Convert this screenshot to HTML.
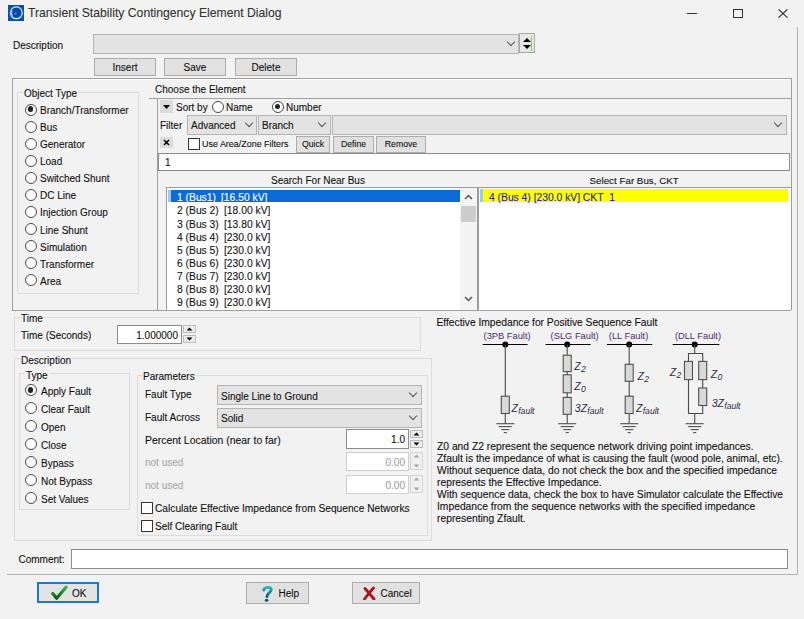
<!DOCTYPE html>
<html><head><meta charset="utf-8">
<style>
*{box-sizing:border-box;margin:0;padding:0}
html,body{width:804px;height:619px;overflow:hidden;background:#f2f2f2}
body{position:relative;font-family:"Liberation Sans",sans-serif;font-size:10px;color:#111;-webkit-text-stroke:0.1px currentColor}
.a{position:absolute;white-space:nowrap}
.t{position:absolute;white-space:nowrap;line-height:12px;height:12px;margin-top:1px}
.btn{position:absolute;background:#e1e1e1;border:1px solid #adadad;text-align:center;line-height:17px;font-size:10px}
.combo{position:absolute;background:#e3e3e3;border:1px solid #b4b4b4}
.edit{position:absolute;background:#fff;border:1px solid #8c8c8c}
.grp{position:absolute;border:1px solid #dcdcdc}
.lbl{position:absolute;white-space:nowrap;background:#f2f2f2;padding:0 1px;line-height:12px;margin-top:1px}
.radio{position:absolute;width:12px;height:12px;border:1.5px solid #484848;border-radius:50%;background:#fff}
.radio.on::after{content:"";position:absolute;left:1.75px;top:1.75px;width:5.5px;height:5.5px;border-radius:50%;background:#222}
.chk{position:absolute;width:12px;height:12px;border:1px solid #333;background:#fff}
.chev{position:absolute;width:6px;height:6px;border-right:1px solid #555;border-bottom:1px solid #555;transform:rotate(45deg)}
</style></head><body>

<!-- title bar -->
<svg class="a" style="left:8px;top:5px" width="16" height="16" viewBox="0 0 16 16">
<rect width="16" height="16" fill="#0d4fb0"/>
<circle cx="8.3" cy="7.8" r="5.9" fill="none" stroke="#dfe8f5" stroke-width="1.3"/>
<circle cx="8.3" cy="7.8" r="5" fill="#0a48a8"/>
<path d="M2.5 5 Q1.5 9 4 12 L5 10 Q3.5 8 4.5 5Z" fill="#8fb4e0"/>
<circle cx="7.5" cy="8.5" r="1.2" fill="#3f7ad0"/>
</svg>
<div class="a" style="left:28px;top:6px;font-size:12.2px;line-height:15px;color:#333">Transient Stability Contingency Element Dialog</div>
<div class="a" style="left:687px;top:13px;width:10px;height:1px;background:#333"></div>
<div class="a" style="left:733px;top:9px;width:10px;height:9px;border:1px solid #333"></div>
<svg class="a" style="left:778px;top:9px" width="10" height="9" viewBox="0 0 10 9"><path d="M0.5 0.3L9.5 8.7M9.5 0.3L0.5 8.7" stroke="#333" stroke-width="1.1"/></svg>

<!-- description row -->
<div class="t" style="left:13px;top:39px">Description</div>
<div class="combo" style="left:93px;top:34px;width:426px;height:20px"></div>
<div class="chev" style="left:508px;top:39px"></div>
<div class="a" style="left:519px;top:33px;width:16px;height:20px;border:1px solid #a8a8a8;background:#e8e8e8"></div>
<div class="a" style="left:531px;top:36px;width:1px;height:15px;background:#7ad858"></div>
<svg class="a" style="left:522px;top:36px" width="10" height="15" viewBox="0 0 10 15"><path d="M1 6L5 2L9 6Z M1 9L9 9L5 13Z" fill="#000"/></svg>

<div class="btn" style="left:94px;top:58px;width:62px;height:18px">Insert</div>
<div class="btn" style="left:164px;top:58px;width:62px;height:18px">Save</div>
<div class="btn" style="left:235px;top:58px;width:62px;height:18px">Delete</div>

<!-- outer panel lines -->
<div class="a" style="left:12px;top:78px;width:779px;height:1px;background:#a0a0a0"></div>
<div class="a" style="left:12px;top:79px;width:779px;height:1px;background:#fff"></div>
<div class="a" style="left:12px;top:78px;width:1px;height:232px;background:#a0a0a0"></div>
<div class="a" style="left:12px;top:310px;width:779px;height:1px;background:#a0a0a0"></div>
<div class="a" style="left:797px;top:27px;width:1px;height:548px;background:#b4b4b4"></div>
<div class="a" style="left:7px;top:574px;width:791px;height:1px;background:#b4b4b4"></div>

<div class="grp" style="left:17px;top:92px;width:122px;height:202px"></div>
<div class="lbl" style="left:23px;top:87px">Object Type</div>
<div class="radio on" style="left:25px;top:103.5px"></div>
<div class="t" style="left:40px;top:104.0px">Branch/Transformer</div>
<div class="radio" style="left:25px;top:120.6px"></div>
<div class="t" style="left:40px;top:121.1px">Bus</div>
<div class="radio" style="left:25px;top:137.6px"></div>
<div class="t" style="left:40px;top:138.1px">Generator</div>
<div class="radio" style="left:25px;top:154.7px"></div>
<div class="t" style="left:40px;top:155.2px">Load</div>
<div class="radio" style="left:25px;top:171.8px"></div>
<div class="t" style="left:40px;top:172.3px">Switched Shunt</div>
<div class="radio" style="left:25px;top:188.8px"></div>
<div class="t" style="left:40px;top:189.3px">DC Line</div>
<div class="radio" style="left:25px;top:205.9px"></div>
<div class="t" style="left:40px;top:206.4px">Injection Group</div>
<div class="radio" style="left:25px;top:223.0px"></div>
<div class="t" style="left:40px;top:223.5px">Line Shunt</div>
<div class="radio" style="left:25px;top:240.1px"></div>
<div class="t" style="left:40px;top:240.6px">Simulation</div>
<div class="radio" style="left:25px;top:257.1px"></div>
<div class="t" style="left:40px;top:257.6px">Transformer</div>
<div class="radio" style="left:25px;top:274.2px"></div>
<div class="t" style="left:40px;top:274.7px">Area</div>
<div class="t" style="left:155px;top:83px">Choose the Element</div>
<div class="a" style="left:149px;top:98px;width:642px;height:1px;background:#a0a0a0"></div>
<div class="a" style="left:791px;top:78px;width:1px;height:232px;background:#a0a0a0"></div>
<div class="a" style="left:157px;top:98px;width:1px;height:212px;background:#a0a0a0"></div>
<div class="a" style="left:160px;top:100px;width:13px;height:13px;background:#dcdcdc"></div>
<svg class="a" style="left:163px;top:105px" width="7" height="4"><path d="M0 0H7L3.5 4Z" fill="#000"/></svg>
<div class="t" style="left:176px;top:101px">Sort by</div>
<div class="radio" style="left:212px;top:101px"></div>
<div class="t" style="left:226px;top:101px">Name</div>
<div class="radio on" style="left:272px;top:101px"></div>
<div class="t" style="left:286px;top:101px">Number</div>
<div class="t" style="left:160px;top:119px">Filter</div>
<div class="combo" style="left:187px;top:115px;width:70px;height:20px"></div>
<div class="t" style="left:191px;top:119px">Advanced</div>
<div class="chev" style="left:246px;top:120px"></div>
<div class="combo" style="left:258px;top:115px;width:73px;height:20px"></div>
<div class="t" style="left:262px;top:119px">Branch</div>
<div class="chev" style="left:319px;top:120px"></div>
<div class="combo" style="left:332px;top:115px;width:455px;height:20px"></div>
<div class="chev" style="left:775px;top:120px"></div>
<div class="a" style="left:160px;top:137px;width:13px;height:11px;background:#dcdcdc"></div>
<svg class="a" style="left:163px;top:139px" width="7" height="7"><path d="M1 1L6 6M6 1L1 6" stroke="#000" stroke-width="1.6"/></svg>
<div class="chk" style="left:188px;top:138px"></div>
<div class="t" style="left:202px;top:137px;font-size:8.95px">Use Area/Zone Filters</div>
<div class="btn" style="left:296px;top:136px;width:34px;height:17px;font-size:8.7px;line-height:15px">Quick</div>
<div class="btn" style="left:333px;top:136px;width:41px;height:17px;font-size:8.7px;line-height:15px">Define</div>
<div class="btn" style="left:376px;top:136px;width:50px;height:17px;font-size:8.7px;line-height:15px">Remove</div>
<div class="edit" style="left:158px;top:153px;width:632px;height:18px"></div>
<div class="t" style="left:165px;top:156px">1</div>
<div class="t" style="left:271px;top:174px">Search For Near Bus</div>
<div class="t" style="left:589.5px;top:174px;font-size:9.8px">Select Far Bus, CKT</div>
<div class="a" style="left:166px;top:187px;width:312px;height:123px;background:#fff;border:1px solid #9a9a9a;border-bottom:none"></div>
<div class="a" style="left:168px;top:190px;width:292px;height:12px;background:#0c6ad8"></div>
<div class="a" style="left:168px;top:190px;width:3px;height:12px;background:#9ccaf0"></div>
<div class="t" style="left:177px;top:191.3px;font-size:10.3px;color:#fff">1 (Bus1)</div>
<div class="t" style="left:221px;top:191.3px;font-size:10.3px;color:#fff">[16.50 kV]</div>
<div class="t" style="left:177px;top:204.4px;font-size:10.3px;color:#111">2 (Bus 2)</div>
<div class="t" style="left:224px;top:204.4px;font-size:10.3px;color:#111">[18.00 kV]</div>
<div class="t" style="left:177px;top:217.6px;font-size:10.3px;color:#111">3 (Bus 3)</div>
<div class="t" style="left:224px;top:217.6px;font-size:10.3px;color:#111">[13.80 kV]</div>
<div class="t" style="left:177px;top:230.7px;font-size:10.3px;color:#111">4 (Bus 4)</div>
<div class="t" style="left:224px;top:230.7px;font-size:10.3px;color:#111">[230.0 kV]</div>
<div class="t" style="left:177px;top:243.9px;font-size:10.3px;color:#111">5 (Bus 5)</div>
<div class="t" style="left:224px;top:243.9px;font-size:10.3px;color:#111">[230.0 kV]</div>
<div class="t" style="left:177px;top:257.0px;font-size:10.3px;color:#111">6 (Bus 6)</div>
<div class="t" style="left:224px;top:257.0px;font-size:10.3px;color:#111">[230.0 kV]</div>
<div class="t" style="left:177px;top:270.1px;font-size:10.3px;color:#111">7 (Bus 7)</div>
<div class="t" style="left:224px;top:270.1px;font-size:10.3px;color:#111">[230.0 kV]</div>
<div class="t" style="left:177px;top:283.3px;font-size:10.3px;color:#111">8 (Bus 8)</div>
<div class="t" style="left:224px;top:283.3px;font-size:10.3px;color:#111">[230.0 kV]</div>
<div class="t" style="left:177px;top:296.4px;font-size:10.3px;color:#111">9 (Bus 9)</div>
<div class="t" style="left:224px;top:296.4px;font-size:10.3px;color:#111">[230.0 kV]</div>
<div class="a" style="left:460px;top:188px;width:17px;height:122px;background:#f4f4f4"></div>
<svg class="a" style="left:464px;top:194px" width="9" height="6"><path d="M1 5L4.5 1.5L8 5" stroke="#555" stroke-width="1.5" fill="none"/></svg>
<div class="a" style="left:461px;top:206px;width:15px;height:16px;background:#cdcdcd"></div>
<svg class="a" style="left:464px;top:296px" width="9" height="6"><path d="M1 1L4.5 4.5L8 1" stroke="#555" stroke-width="1.5" fill="none"/></svg>
<div class="a" style="left:478px;top:187px;width:314px;height:123px;background:#fff;border:1px solid #9a9a9a;border-bottom:none"></div>
<div class="a" style="left:483px;top:189px;width:305px;height:13px;background:#ffff00"></div>
<div class="a" style="left:480px;top:189px;width:3px;height:13px;background:#9ccaf0"></div>
<div class="t" style="left:489px;top:191px;font-size:10.3px;color:#1c1cb0">4 (Bus 4) [230.0 kV] CKT&nbsp; 1</div>
<div class="grp" style="left:14px;top:317px;width:407px;height:34px"></div>
<div class="lbl" style="left:20px;top:312px">Time</div>
<div class="t" style="left:21px;top:329px">Time (Seconds)</div>
<div class="edit" style="left:117px;top:325px;width:65px;height:19px"></div>
<div class="t" style="left:117px;top:329px;width:61px;text-align:right">1.000000</div>
<div class="a" style="left:183px;top:325px;width:13px;height:8.0px;border:1px solid #bcbcbc;background:#ececec"></div>
<div class="a" style="left:183px;top:335.0px;width:13px;height:8.0px;border:1px solid #bcbcbc;background:#ececec"></div>
<svg class="a" style="left:183px;top:325px" width="13" height="18" viewBox="183 325 13 18"><path d="M186.5 330.5L189.5 327.5L192.5 330.5Z M186.5 337.5H192.5L189.5 340.5Z" fill="#000"/></svg>
<div class="grp" style="left:14px;top:358px;width:418px;height:183px"></div>
<div class="lbl" style="left:20px;top:353.5px">Description</div>
<div class="grp" style="left:19px;top:373px;width:111px;height:137px"></div>
<div class="lbl" style="left:25px;top:368.5px">Type</div>
<div class="radio on" style="left:25px;top:384.4px"></div>
<div class="t" style="left:41px;top:384.9px">Apply Fault</div>
<div class="radio" style="left:25px;top:402.3px"></div>
<div class="t" style="left:41px;top:402.8px">Clear Fault</div>
<div class="radio" style="left:25px;top:420.3px"></div>
<div class="t" style="left:41px;top:420.8px">Open</div>
<div class="radio" style="left:25px;top:438.2px"></div>
<div class="t" style="left:41px;top:438.7px">Close</div>
<div class="radio" style="left:25px;top:456.1px"></div>
<div class="t" style="left:41px;top:456.6px">Bypass</div>
<div class="radio" style="left:25px;top:474.0px"></div>
<div class="t" style="left:41px;top:474.5px">Not Bypass</div>
<div class="radio" style="left:25px;top:492.0px"></div>
<div class="t" style="left:41px;top:492.5px">Set Values</div>
<div class="grp" style="left:137px;top:375px;width:291px;height:161px"></div>
<div class="lbl" style="left:142px;top:369.5px">Parameters</div>
<div class="t" style="left:145px;top:388px">Fault Type</div>
<div class="combo" style="left:217px;top:385px;width:205px;height:20px"></div>
<div class="t" style="left:221px;top:389.5px">Single Line to Ground</div>
<div class="chev" style="left:410px;top:390px"></div>
<div class="t" style="left:145px;top:410.5px">Fault Across</div>
<div class="combo" style="left:217px;top:408px;width:205px;height:20px"></div>
<div class="t" style="left:221px;top:412px">Solid</div>
<div class="chev" style="left:410px;top:413px"></div>
<div class="t" style="left:145px;top:434px;font-size:10.45px">Percent Location (near to far)</div>
<div class="edit" style="left:346px;top:429px;width:63px;height:20px"></div>
<div class="t" style="left:346px;top:433px;width:59px;text-align:right">1.0</div>
<div class="a" style="left:410px;top:430px;width:13px;height:8.0px;border:1px solid #bcbcbc;background:#ececec"></div>
<div class="a" style="left:410px;top:440.0px;width:13px;height:8.0px;border:1px solid #bcbcbc;background:#ececec"></div>
<svg class="a" style="left:410px;top:430px" width="13" height="18" viewBox="410 430 13 18"><path d="M413.5 435.5L416.5 432.5L419.5 435.5Z M413.5 442.5H419.5L416.5 445.5Z" fill="#000"/></svg>
<div class="t" style="left:145px;top:456px;color:#a8a8a8">not used</div>
<div class="edit" style="left:346px;top:452px;width:63px;height:19px;border-color:#cfcfcf"></div>
<div class="t" style="left:346px;top:455.5px;width:59px;text-align:right;color:#a0a0a0">0.00</div>
<div class="a" style="left:410px;top:452px;width:13px;height:18px;border:1px solid #d4d4d4;background:#f0f0f0"></div>
<svg class="a" style="left:410px;top:452px" width="13" height="18" viewBox="410 452 13 18"><path d="M413.5 457.5L416.5 454.5L419.5 457.5Z M413.5 464.5H419.5L416.5 467.5Z" fill="#a8a8a8"/></svg>
<div class="t" style="left:145px;top:479.3px;color:#a8a8a8">not used</div>
<div class="edit" style="left:346px;top:475px;width:63px;height:19px;border-color:#cfcfcf"></div>
<div class="t" style="left:346px;top:478.5px;width:59px;text-align:right;color:#a0a0a0">0.00</div>
<div class="a" style="left:410px;top:475px;width:13px;height:18px;border:1px solid #d4d4d4;background:#f0f0f0"></div>
<svg class="a" style="left:410px;top:475px" width="13" height="18" viewBox="410 475 13 18"><path d="M413.5 480.5L416.5 477.5L419.5 480.5Z M413.5 487.5H419.5L416.5 490.5Z" fill="#a8a8a8"/></svg>
<div class="chk" style="left:141px;top:502px"></div>
<div class="t" style="left:155px;top:502px;font-size:10.2px">Calculate Effective Impedance from Sequence Networks</div>
<div class="chk" style="left:141px;top:520px"></div>
<div class="t" style="left:155px;top:520px">Self Clearing Fault</div>
<div class="t" style="left:436.5px;top:316px;font-size:10.25px">Effective Impedance for Positive Sequence Fault</div>
<div class="a" style="left:437px;top:440.5px;font-size:10.3px;line-height:12px">Z0 and Z2 represent the sequence network driving point impedances.<br>Zfault is the impedance of what is causing the fault (wood pole, animal, etc).<br>Without sequence data, do not check the box and the specified impedance<br>represents the Effective Impedance.<br>With sequence data, check the box to have Simulator calculate the Effective<br>Impedance from the sequence networks with the specified impedance<br>representing Zfault.</div>
<div class="t" style="left:18.5px;top:552.5px">Comment:</div>
<div class="edit" style="left:71px;top:549px;width:717px;height:20px"></div>
<div class="a" style="left:37px;top:582px;width:62px;height:21px;border:2px solid #1a78d8;background:#e3e3e3"></div>
<svg class="a" style="left:50px;top:585px" width="18" height="16" viewBox="0 0 18 16"><defs><linearGradient id="gk" x1="0" y1="0" x2="0" y2="1"><stop offset="0" stop-color="#3cb43c"/><stop offset="1" stop-color="#0a5a14"/></linearGradient></defs><path d="M2.8 8.6L6.6 13.2L16 2.2" stroke="url(#gk)" stroke-width="3.2" fill="none" stroke-linejoin="round" stroke-linecap="round"/></svg>
<div class="t" style="left:72px;top:587px">OK</div>
<div class="btn" style="left:246px;top:582px;width:63px;height:22px"></div>
<svg class="a" style="left:258px;top:583px" width="18" height="20" viewBox="258 583 18 20"><defs><linearGradient id="gq" x1="0" y1="0" x2="0" y2="1"><stop offset="0" stop-color="#22b8c0"/><stop offset="1" stop-color="#0a5868"/></linearGradient></defs><path d="M263.8 590.2C263.8 586.8 271.3 586.3 271.3 589.6C271.3 592.4 267.4 592.8 267 596.6" stroke="url(#gq)" stroke-width="2.8" fill="none" stroke-linecap="round"/><ellipse cx="266.6" cy="600.2" rx="1.8" ry="1.5" fill="#0a5868"/></svg>
<div class="t" style="left:278.5px;top:587px">Help</div>
<div class="btn" style="left:352px;top:582px;width:68px;height:22px"></div>
<svg class="a" style="left:362px;top:586px" width="14" height="14" viewBox="0 0 14 14"><path d="M3 2.5Q7 7 12 13M11.5 2Q7 7 2.5 13" stroke="#b0101a" stroke-width="2.8" stroke-linecap="round" fill="none"/></svg>
<div class="t" style="left:380.5px;top:587px">Cancel</div>
<svg class="a" style="left:470px;top:325px" width="290" height="112" viewBox="470 325 290 112">
<g font-family="Liberation Sans" font-size="9.3" fill="#4a2c68">
<text x="483.6" y="338.8">(3PB Fault)</text>
<text x="550.6" y="338.8">(SLG Fault)</text>
<text x="608.8" y="338.8">(LL Fault)</text>
<text x="674.9" y="338.8">(DLL Fault)</text>
</g>
<line x1="482.7" y1="344.5" x2="527.6" y2="344.5" stroke="#000" stroke-width="1.2"/>
<circle cx="505.3" cy="344.5" r="3" fill="#000"/>
<line x1="496.3" y1="423.7" x2="514.3" y2="423.7" stroke="#505050" stroke-width="1.1"/>
<line x1="498.8" y1="426.6" x2="511.8" y2="426.6" stroke="#505050" stroke-width="1.1"/>
<line x1="501.3" y1="429.6" x2="509.3" y2="429.6" stroke="#505050" stroke-width="1.1"/>
<line x1="503.8" y1="432.6" x2="506.8" y2="432.6" stroke="#505050" stroke-width="1.1"/>
<line x1="545.5" y1="344.5" x2="590.6" y2="344.5" stroke="#000" stroke-width="1.2"/>
<circle cx="567.2" cy="344.5" r="3" fill="#000"/>
<line x1="558.2" y1="423.7" x2="576.2" y2="423.7" stroke="#505050" stroke-width="1.1"/>
<line x1="560.7" y1="426.6" x2="573.7" y2="426.6" stroke="#505050" stroke-width="1.1"/>
<line x1="563.2" y1="429.6" x2="571.2" y2="429.6" stroke="#505050" stroke-width="1.1"/>
<line x1="565.7" y1="432.6" x2="568.7" y2="432.6" stroke="#505050" stroke-width="1.1"/>
<line x1="607" y1="344.5" x2="652.2" y2="344.5" stroke="#000" stroke-width="1.2"/>
<circle cx="629.2" cy="344.5" r="3" fill="#000"/>
<line x1="620.2" y1="423.7" x2="638.2" y2="423.7" stroke="#505050" stroke-width="1.1"/>
<line x1="622.7" y1="426.6" x2="635.7" y2="426.6" stroke="#505050" stroke-width="1.1"/>
<line x1="625.2" y1="429.6" x2="633.2" y2="429.6" stroke="#505050" stroke-width="1.1"/>
<line x1="627.7" y1="432.6" x2="630.7" y2="432.6" stroke="#505050" stroke-width="1.1"/>
<line x1="672.7" y1="344.5" x2="719.3" y2="344.5" stroke="#000" stroke-width="1.2"/>
<circle cx="694.7" cy="344.5" r="3" fill="#000"/>
<line x1="685.7" y1="423.7" x2="703.7" y2="423.7" stroke="#505050" stroke-width="1.1"/>
<line x1="688.2" y1="426.6" x2="701.2" y2="426.6" stroke="#505050" stroke-width="1.1"/>
<line x1="690.7" y1="429.6" x2="698.7" y2="429.6" stroke="#505050" stroke-width="1.1"/>
<line x1="693.2" y1="432.6" x2="696.2" y2="432.6" stroke="#505050" stroke-width="1.1"/>
<path d="M505.3 344.5V423.7 M567.2 344.5V423.7 M629.2 344.5V423.7 M694.7 344.5V353.5 M688.5 353.5H702.7V413.5H688.5Z M694.7 413.5V423.7" stroke="#4a4a4a" stroke-width="1.1" fill="none"/>
<rect x="501.3" y="396.2" width="8.0" height="17.30000000000001" fill="#d9d9d9" stroke="#505050" stroke-width="1.1"/>
<rect x="563.2" y="355.2" width="8.0" height="16.400000000000034" fill="#d9d9d9" stroke="#505050" stroke-width="1.1"/>
<rect x="563.2" y="374.8" width="8.0" height="18.0" fill="#d9d9d9" stroke="#505050" stroke-width="1.1"/>
<rect x="563.2" y="397.4" width="8.0" height="16.900000000000034" fill="#d9d9d9" stroke="#505050" stroke-width="1.1"/>
<rect x="625.2" y="364.3" width="8.0" height="17.0" fill="#d9d9d9" stroke="#505050" stroke-width="1.1"/>
<rect x="625.2" y="396.2" width="8.0" height="17.30000000000001" fill="#d9d9d9" stroke="#505050" stroke-width="1.1"/>
<rect x="684.5" y="361.4" width="8.0" height="18.200000000000045" fill="#d9d9d9" stroke="#505050" stroke-width="1.1"/>
<rect x="698.7" y="361.4" width="8.0" height="18.200000000000045" fill="#d9d9d9" stroke="#505050" stroke-width="1.1"/>
<rect x="698.7" y="388" width="8.0" height="17.5" fill="#d9d9d9" stroke="#505050" stroke-width="1.1"/>
<g font-family="Liberation Sans" font-style="italic" fill="#2c2c40">
<text x="511.5" y="412.0" font-size="10.5">Z<tspan font-size="8.6" dy="2.2" dx="0.3">fault</tspan></text>
<text x="574.3" y="369.7" font-size="10.5">Z<tspan font-size="8.6" dy="2.2" dx="0.3">2</tspan></text>
<text x="574.3" y="390.0" font-size="10.5">Z<tspan font-size="8.6" dy="2.2" dx="0.3">0</tspan></text>
<text x="574.8" y="412.0" font-size="10.5">3Z<tspan font-size="8.6" dy="2.2" dx="0.3">fault</tspan></text>
<text x="637.6" y="379.8" font-size="10.5">Z<tspan font-size="8.6" dy="2.2" dx="0.3">2</tspan></text>
<text x="636.0" y="412.0" font-size="10.5">Z<tspan font-size="8.6" dy="2.2" dx="0.3">fault</tspan></text>
<text x="669.8" y="376.0" font-size="10.5">Z<tspan font-size="8.6" dy="2.2" dx="0.3">2</tspan></text>
<text x="710.8" y="378.0" font-size="10.5">Z<tspan font-size="8.6" dy="2.2" dx="0.3">0</tspan></text>
<text x="711.7" y="407.0" font-size="10.5">3Z<tspan font-size="8.6" dy="2.2" dx="0.3">fault</tspan></text>
</g></svg>
</body></html>
